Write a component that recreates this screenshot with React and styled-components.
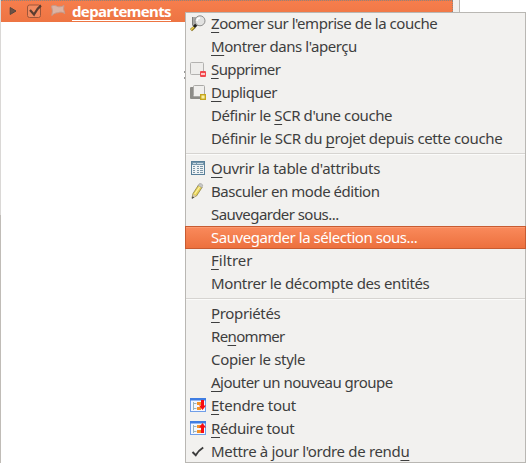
import React from "react";
import styled, { createGlobalStyle, css } from "styled-components";

const GlobalStyle = createGlobalStyle`
  * { box-sizing: border-box; }
  body { margin: 0; background: #fff; overflow: hidden; }
`;

const Desktop = styled.div`
  position: relative;
  width: 526px;
  height: 463px;
  background: #fff;
  overflow: hidden;
  font-family: "Noto Sans", "Open Sans", sans-serif;
  font-size: 15px;
  color: #3e3e3e;
`;

const LayerPanel = styled.div`
  display: flex;
  height: 463px;
`;

const PanelEdge = styled.div`
  width: 1px;
  background: linear-gradient(#dad8d6 215px, #c0bcb7 215px);
`;

const LayerRow = styled.div`
  display: flex;
  align-items: flex-start;
  width: 452px;
  height: 22px;
  border-top: 1px dotted #8d8580;
  border-right: 1px dotted #8d8580;
  background: linear-gradient(#f67e4d, #ed7442);
`;

const ScrollGutter = styled.div`
  width: 7px;
  border-right: 1px solid #bab7b3;
  background: #f1f0ee;
`;

const Expander = styled.svg`
  flex: none;
  margin: 5px 0 0 8px;
`;

const Checkbox = styled.svg`
  flex: none;
  margin: 2px 0 0 9px;
`;

const PolygonIcon = styled.svg`
  flex: none;
  margin: 3px 0 0 7px;
`;

const LayerName = styled.span`
  margin-left: 6px;
  height: 20px;
  line-height: 21px;
  border-bottom: 1px solid #fff;
  color: #fff;
  font-weight: 700;
  letter-spacing: -0.62px;
  white-space: nowrap;
`;

const CoveredMark = styled.i`
  position: absolute;
  left: 184px;
  top: 71px;
  width: 1px;
  height: 8px;
  background: linear-gradient(#999 2px, transparent 2px 6px, #999 6px);
`;

const Menu = styled.div`
  position: absolute;
  left: 185px;
  top: 12px;
  width: 341px;
  height: 451px;
  background: #f2f1ef;
  box-shadow: inset 0 0 0 1px #b9b7b3;
`;

const MenuItem = styled.div`
  display: flex;
  height: 23px;
  padding-left: 4px;
  ${(p) =>
    p.$active &&
    css`
      color: #fff;
      background: linear-gradient(#fa8b5d, #ec6f3c);
      box-shadow: inset 0 0 0 1px #c75b31, inset 0 2px 0 #fc9a70;
    `}
`;

const IconSlot = styled.span`
  flex: none;
  width: 18px;
  height: 18px;
  margin: 3px 4px 0 0;
`;

const Label = styled.span`
  line-height: 23px;
  white-space: pre;
  letter-spacing: ${(p) => p.$spacing}px;
`;

const Mnemonic = styled.span`
  text-decoration: underline 1px;
  text-underline-offset: 3px;
  text-decoration-skip-ink: none;
`;

const Separator = styled.div`
  height: 7px;
  margin: 0 1px;
  background: linear-gradient(transparent 3px, #d6d4d1 3px 4px, #fbfbfa 4px 5px, transparent 5px);
`;

const Glyph = styled.svg`
  display: block;
`;

const Svg = ({ children }) => (
  <Glyph width="18" height="18" viewBox="0 0 18 18" fill="none">{children}</Glyph>
);

const ZoomIcon = () => (
  <Svg>
    <path d="M3 2h6v9H3z" fill="#a9a9a7" />
    <path d="M3.5 2v8" stroke="#7f7f7d" />
    <path d="M2 15.2L5.5 12" stroke="#8b7420" strokeWidth="3" />
    <path d="M2 14.8L5 12" stroke="#ecd04c" strokeWidth="1.5" />
    <path d="M5 12l2.2-2.2" stroke="#222" strokeWidth="3" />
    <circle cx="11" cy="5.8" r="5" fill="#e2e2e1" stroke="#8d8d8c" />
    <path d="M8 6a3 3 0 0 1 3-3" stroke="#fff" strokeWidth="1.5" />
  </Svg>
);
const RemoveIcon = () => (
  <Svg>
    <rect x="1.5" y="1.5" width="13" height="12" rx="1" fill="#eeedeb" stroke="#b3b2b0" />
    <rect x="11" y="10" width="6" height="6" rx="1" fill="#f0474d" />
    <path d="M12 13h4" stroke="#ffc4c4" strokeWidth="2" />
  </Svg>
);
const DuplicateIcon = () => (
  <Svg>
    <path d="M1 4q0-1 1-1h2v9h8v3H2q-1 0-1-1z" fill="#8d8c88" />
    <rect x="4.5" y="1.5" width="11" height="11" rx="1" fill="#f0efed" stroke="#aaa9a6" />
    <rect x="11.7" y="10.7" width="4.6" height="4.6" fill="#f8ef9e" stroke="#c5a51c" strokeWidth="1.4" />
  </Svg>
);
const TableIcon = () => (
  <Svg>
    <rect x="2.5" y="1.5" width="13" height="13" fill="#eef2f4" stroke="#587f99" />
    <path d="M3 2h12v3H3z" fill="#7596ab" />
    <path d="M4 3.5h3M8 3.5h6" stroke="#c9d9e2" />
    <path d="M4 6.5h2M4 8.5h2M4 10.5h2M4 12.5h2M8 6.5h2M11 6.5h3M8 8.5h2M11 8.5h3M8 10.5h2M11 10.5h3M8 12.5h2M11 12.5h3" stroke="#7b95a6" />
  </Svg>
);
const PencilIcon = () => (
  <Svg>
    <path d="M3 15l1-4.5L9.5 2l3.7 2.2L7.5 13z" fill="#e8d35a" stroke="#8b8047" strokeWidth=".8" />
    <path d="M5.7 11l5.6-8" stroke="#fff3a0" strokeWidth="1.2" />
    <path d="M9.2 2.6L10.5.6q1.9-.4 3.3 1.5L12.8 4.6z" fill="#c9c9c6" stroke="#999" strokeWidth=".6" />
    <path d="M3 15.3l1.2-4 3 1.8z" fill="#d4c8b4" />
    <path d="M2.7 16l.8-2.7 1.7 1.1z" fill="#444" />
  </Svg>
);
const TreeIcon = ({ up }) => (
  <Svg>
    <rect x="1.5" y="1.5" width="15" height="13" fill="#f3f7ff" stroke="#709ee8" />
    <path d="M1 1h16v2.5H1z" fill="#3f7de2" />
    <path d="M4.5 5v8M4.5 6.5h3M4.5 11.5h3" stroke="#9eb4b8" />
    <path d="M8 5h4v3H8zM8 10h4v3H8z" fill="#f59227" />
    <path d={up ? "M13.5 3L17 7.5h-2V13h-3V7.5h-2z" : "M12 3h3v5.5h2L13.5 13 10 8.5h2z"} fill="#f80d13" />
  </Svg>
);
const CheckIcon = () => (
  <Svg>
    <path d="M3.5 9l3.2 3.2Q9.5 7.5 14.2 4.5" stroke="#3c3c3c" strokeWidth="2" />
  </Svg>
);

/* An underscore precedes the letter that carries the mnemonic underline. */
const groups = [
  [
    { text: "_Zoomer sur l'emprise de la couche", spacing: -0.47, icon: <ZoomIcon /> },
    { text: "_Montrer dans l'aperçu", spacing: -0.43 },
    { text: "_Supprimer", spacing: -0.6, icon: <RemoveIcon /> },
    { text: "_Dupliquer", spacing: -0.5, icon: <DuplicateIcon /> },
    { text: "Définir le _SCR d'une couche", spacing: -0.42 },
    { text: "Définir le SCR du _projet depuis cette couche", spacing: -0.37 },
  ],
  [
    { text: "_Ouvrir la table d'attributs", spacing: -0.28, icon: <TableIcon /> },
    { text: "Basculer en mode édition", spacing: -0.47, icon: <PencilIcon /> },
    { text: "Sauvegarder sous...", spacing: -0.55 },
    { text: "Sauvegarder la sélection sous...", spacing: -0.46, active: true },
    { text: "_Filtrer", spacing: 0 },
    { text: "Montrer le décompte des entités", spacing: -0.37 },
  ],
  [
    { text: "_Propriétés", spacing: -0.35 },
    { text: "Re_nommer", spacing: -0.65 },
    { text: "Copier le style", spacing: -0.32 },
    { text: "_Ajouter un nouveau groupe", spacing: -0.52 },
    { text: "_Etendre tout", spacing: -0.27, icon: <TreeIcon /> },
    { text: "_Réduire tout", spacing: -0.36, icon: <TreeIcon up /> },
    { text: "Mettre à jour l'ordre de rend_u", spacing: -0.33, icon: <CheckIcon /> },
  ],
];

const ItemLabel = ({ text, spacing }) => {
  const at = text.indexOf("_");
  if (at < 0) return <Label $spacing={spacing}>{text}</Label>;
  return (
    <Label $spacing={spacing}>
      {text.slice(0, at)}
      <Mnemonic>{text[at + 1]}</Mnemonic>
      {text.slice(at + 2)}
    </Label>
  );
};

export default function App() {
  return (
    <Desktop>
      <GlobalStyle />
      <LayerPanel>
        <PanelEdge />
        <LayerRow>
          <Expander width="8" height="10" viewBox="0 0 8 10">
            <path d="M1.2 1.5v7L7 5z" fill="#6d5145" stroke="#55463d" />
          </Expander>
          <Checkbox width="17" height="16" viewBox="0 0 17 16" fill="none">
            <rect x="1.5" y="2" width="13" height="12.5" rx="2" fill="#f28a5f" stroke="#9d563a" />
            <path d="M4 7l4 4.5Q11 5.5 15 2.5" stroke="#5a3d30" strokeWidth="2.2" />
          </Checkbox>
          <PolygonIcon width="16" height="13" viewBox="0 0 16 13">
            <path
              d="M1.5 2C4 1 6 1.5 8 2.8C10 3 12 2.5 14 1.5L13.5 5L14.8 9.5C12 7.8 10 7.8 8 8.8C6 8.5 4 9.5 1.8 11.5L2.5 7Z"
              fill="#dcb3a4"
              stroke="#c59c8d"
            />
          </PolygonIcon>
          <LayerName>departements</LayerName>
        </LayerRow>
        <ScrollGutter />
      </LayerPanel>
      <CoveredMark />
      <Menu>
        {groups.map((items, g) => (
          <React.Fragment key={g}>
            {g > 0 && <Separator />}
            {items.map((item) => (
              <MenuItem key={item.text} $active={item.active}>
                <IconSlot>{item.icon}</IconSlot>
                <ItemLabel text={item.text} spacing={item.spacing} />
              </MenuItem>
            ))}
          </React.Fragment>
        ))}
      </Menu>
    </Desktop>
  );
}
